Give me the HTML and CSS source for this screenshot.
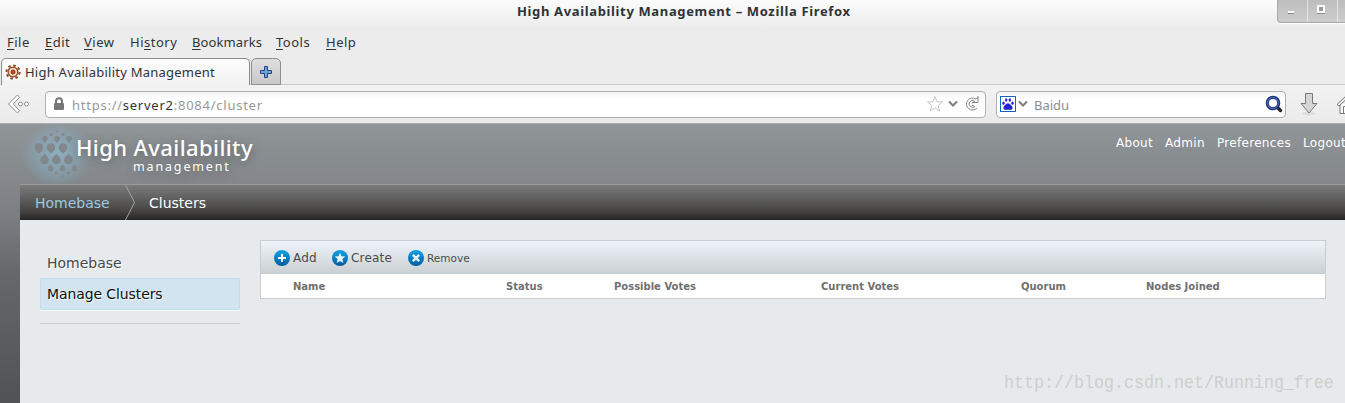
FILE: index.html
```html
<!DOCTYPE html>
<html lang="en">
<head>
    <meta charset="utf-8">
    <title>High Availability Management</title>
    <link rel="stylesheet" href="styles.css">
</head>
<body>
    <div class="titlebar">
        <span class="window-title">High Availability Management – Mozilla Firefox</span>
        <div class="window-buttons">
            <span><i class="minimize"></i></span>
            <span><i class="maximize"></i></span>
            <span></span>
        </div>
    </div>

    <div class="menubar">
        <span class="file"><u>F</u>ile</span>
        <span class="edit"><u>E</u>dit</span>
        <span class="view"><u>V</u>iew</span>
        <span class="history">Hi<u>s</u>tory</span>
        <span class="bookmarks"><u>B</u>ookmarks</span>
        <span class="tools"><u>T</u>ools</span>
        <span class="help"><u>H</u>elp</span>
    </div>

    <div class="tabs">
        <div class="tab">
            <svg width="16" height="16" viewBox="0 0 16 16">
                <rect width="16" height="16" fill="#fff"/>
                <circle cx="8" cy="8" r="6.6" fill="none" stroke="#89461f" stroke-width="2" stroke-dasharray="2.6 2.58"/>
                <circle cx="8" cy="8" r="4.8" fill="#f0dfd0" stroke="#96552d" stroke-width="1.6"/>
                <circle cx="8" cy="8" r="2" fill="#d4500f" stroke="#7c2b10"/>
            </svg>
            <span>High Availability Management</span>
        </div>
        <div class="new-tab">
            <svg width="14" height="14" viewBox="0 0 14 14">
                <path d="M5.500 1.500h3v4h4v3h-4v4h-3v-4h-4v-3h4z" fill="#6f9fd8" stroke="#204a87" stroke-linejoin="round"/>
            </svg>
        </div>
    </div>

    <div class="toolbar">
        <svg class="back" width="24" height="22" viewBox="0 0 24 22">
            <path d="M10.500 2L1.500 11l9 9 2-2.300L6.300 11l6.200-6.700z" fill="#fff" stroke="#8b8d89" stroke-linejoin="round"/>
            <circle cx="13.500" cy="11" r="2" fill="#fff" stroke="#8b8d89"/>
            <circle cx="19.500" cy="11" r="2" fill="#fff" stroke="#8b8d89"/>
        </svg>
        <div class="url-box">
            <svg width="12" height="14" viewBox="0 0 12 14">
                <path d="M3 7V4.200a3 3 0 0 1 6 0V7" fill="none" stroke="#777" stroke-width="2"/>
                <rect x="1" y="6" width="10" height="7" rx="1" fill="#777"/>
            </svg>
            <span class="url">https://<b>server2</b>:8084/cluster</span>
            <svg class="star" width="18" height="18" viewBox="0 0 18 18">
                <path d="M9 1.500l2 5.200 5.500.3-4.300 3.500 1.500 5.500L9 12.900l-4.700 3.100 1.500-5.500L1.500 7 7 6.700z" fill="#fff" stroke="#c6c6c6" stroke-linejoin="round"/>
            </svg>
            <svg class="chevron" width="10" height="8" viewBox="0 0 10 8">
                <path d="M1 1.500l4 4 4-4" fill="none" stroke="#808080" stroke-width="2.200"/>
            </svg>
            <svg class="reload" width="16" height="16" viewBox="0 0 16 16">
                <path d="M13 12A6 6 0 1 1 12 3.200M14 0v6.500H8" fill="none" stroke="#858585" stroke-width="1"/>
                <path d="M11 10.500A3.500 3.500 0 1 1 10.500 5L8 7.500M8 9.500h2" fill="none" stroke="#858585" stroke-width="1"/>
                <path d="M12 3.200L14 1" stroke="#858585"/>
            </svg>
        </div>
        <div class="search-box">
            <svg width="16" height="16" viewBox="0 0 16 16">
                <rect x=".5" y=".5" width="15" height="15" fill="#fff" stroke="#0868c0"/>
                <g fill="#2420dc">
                    <ellipse cx="3.500" cy="7.200" rx="1.200" ry="1.600"/>
                    <ellipse cx="6.200" cy="4" rx="1.200" ry="1.700"/>
                    <ellipse cx="9.800" cy="4" rx="1.200" ry="1.700"/>
                    <ellipse cx="12.500" cy="7.200" rx="1.200" ry="1.600"/>
                    <path d="M8 7.200c1.600 0 2.100 1.300 3.300 2.300 1.800 1.500 1.700 4.300-.6 4.300H5.300c-2.300 0-2.400-2.800-.6-4.300C5.900 8.500 6.400 7.200 8 7.200z"/>
                </g>
            </svg>
            <svg class="chevron" width="10" height="8" viewBox="0 0 10 8">
                <path d="M1 1.500l4 4 4-4" fill="none" stroke="#808080" stroke-width="2.200"/>
            </svg>
            <span class="engine">Baidu</span>
            <svg class="magnifier" width="18" height="18" viewBox="0 0 18 18">
                <path d="M11.500 11.500l4 4" stroke="#242424" stroke-width="3.500" stroke-linecap="round"/>
                <circle cx="8" cy="8" r="5.700" fill="#fff" stroke="#20347f" stroke-width="3.200"/>
                <circle cx="8" cy="8" r="5.500" fill="none" stroke="#5471bd" stroke-width="1"/>
            </svg>
        </div>
        <svg class="download" width="20" height="24" viewBox="0 0 20 24">
            <ellipse cx="10" cy="21.500" rx="7" ry="1.500" fill="#dadada"/>
            <path d="M6.500 1.500h7v10h4.500l-8 9.500-8-9.500h4.500z" fill="#d3d6d4" stroke="#777a76" stroke-linejoin="round"/>
        </svg>
        <svg class="home" width="22" height="22" viewBox="0 0 22 22">
            <path d="M4 11v9.500h14V11" fill="#fff" stroke="#777a76"/>
            <path d="M11 2L1 11.500 3 13l8-7.500 8 7.500 2-1.500z" fill="#eee" stroke="#777a76"/>
            <path d="M7.500 20v-6.500h4V20" fill="#fff" stroke="#777a76"/>
        </svg>
    </div>

    <div class="page">
        <div class="header">
            <svg class="logo-mark" width="84" height="60" viewBox="0 0 84 60">
                <defs>
                    <radialGradient id="glow">
                        <stop offset="0" stop-color="#8fb4c6" stop-opacity=".9"/>
                        <stop offset=".5" stop-color="#87aabb" stop-opacity=".65"/>
                        <stop offset="1" stop-color="#87aabb" stop-opacity="0"/>
                    </radialGradient>
                    <path id="drop" d="M0 5.300C-1.500 3.200-4.300 2-4.300-1A4.300 4.300 0 0 1 4.300-1C4.300 2 1.500 3.200 0 5.300z"/>
                </defs>
                <ellipse cx="39" cy="30" rx="36" ry="33" fill="url(#glow)"/>
                <g fill="#82878c">
                    <use href="#drop" transform="translate(21 24.500)"/>
                    <use href="#drop" transform="translate(33 24.500)"/>
                    <use href="#drop" transform="translate(45 24.500)"/>
                    <use href="#drop" transform="translate(26.500 35) rotate(180)"/>
                    <use href="#drop" transform="translate(38.500 35) rotate(180)"/>
                    <use href="#drop" transform="translate(50.500 35) rotate(180)"/>
                    <use href="#drop" transform="translate(27 15.500) scale(.65)"/>
                    <use href="#drop" transform="translate(39 15.500) scale(.65)"/>
                    <use href="#drop" transform="translate(51 15.500) scale(.65)"/>
                    <use href="#drop" transform="translate(32.500 44) rotate(180) scale(.65)"/>
                    <use href="#drop" transform="translate(44.500 44) rotate(180) scale(.65)"/>
                    <use href="#drop" transform="translate(56.500 44) rotate(180) scale(.65)"/>
                    <circle cx="33" cy="10.500" r="1.600"/>
                    <circle cx="45" cy="10.500" r="1.600"/>
                    <circle cx="39" cy="7.500" r="1"/>
                    <circle cx="38.500" cy="49" r="1.600"/>
                    <circle cx="50.500" cy="49" r="1.600"/>
                    <circle cx="44.500" cy="52" r="1"/>
                </g>
            </svg>
            <div class="brand">
                <div class="brand-name">High Availability</div>
                <div class="brand-sub">management</div>
            </div>
            <div class="user-links">
                <a>About</a>
                <a>Admin</a>
                <a>Preferences</a>
                <a>Logout</a>
            </div>
        </div>

        <div class="main">
            <div class="breadcrumb">
                <a>Homebase</a>
                <svg width="11" height="35" viewBox="0 0 11 35">
                    <path d="M.5 0l9 17.500L.5 35" fill="none" stroke="#a2a2a2"/>
                </svg>
                <span>Clusters</span>
            </div>

            <div class="content">
                <div class="sidebar">
                    <a>Homebase</a>
                    <a class="active">Manage Clusters</a>
                    <hr>
                </div>
                <div class="clusters">
                    <div class="actions">
                        <a class="add">
                            <svg width="16" height="16" viewBox="0 0 16 16">
                                <defs>
                                    <linearGradient id="blue" x2="0" y2="1">
                                        <stop offset="0" stop-color="#13a3e6"/>
                                        <stop offset="1" stop-color="#005c9d"/>
                                    </linearGradient>
                                </defs>
                                <circle cx="8" cy="8" r="8" fill="url(#blue)"/>
                                <path d="M8 4v8M4 8h8" stroke="#fff" stroke-width="2"/>
                            </svg>
                            <span>Add</span>
                        </a>
                        <a class="create">
                            <svg width="16" height="16" viewBox="0 0 16 16">
                                <circle cx="8" cy="8" r="8" fill="url(#blue)"/>
                                <path d="M8 2.800l1.500 3.500 3.800.3-2.900 2.500.9 3.800L8 10.900l-3.300 2 .9-3.800-2.900-2.500 3.800-.3z" fill="#e8f3fa"/>
                            </svg>
                            <span>Create</span>
                        </a>
                        <a class="remove">
                            <svg width="16" height="16" viewBox="0 0 16 16">
                                <circle cx="8" cy="8" r="8" fill="url(#blue)"/>
                                <path d="M4.800 4.800l6.400 6.400M11.200 4.800l-6.400 6.400" stroke="#e8f3fa" stroke-width="2.400"/>
                            </svg>
                            <span>Remove</span>
                        </a>
                    </div>
                    <div class="columns">
                        <span>Name</span>
                        <span>Status</span>
                        <span>Possible Votes</span>
                        <span>Current Votes</span>
                        <span>Quorum</span>
                        <span>Nodes Joined</span>
                    </div>
                </div>
            </div>
        </div>
    </div>
    <div class="watermark">http://blog.csdn.net/Running_free</div>
</body>
</html>
```
FILE: styles.css
```css
* {
    box-sizing: border-box;
}

body {
    margin: 0;
    height: 403px;
    overflow: hidden;
    display: flex;
    flex-direction: column;
    position: relative;
    background: #ececec;
    color: #2e3436;
    font-family: "Noto Sans", "Open Sans", sans-serif;
    font-size: 13px;
    white-space: nowrap;
}

svg {
    display: block;
    flex: none;
}

/* window frame */
.titlebar {
    height: 28px;
    flex: none;
    display: flex;
    justify-content: flex-end;
    background: linear-gradient(#fcfcfc, #ececec);
}

.window-title {
    width: 759px;
    margin-right: 1px;
    line-height: 23px;
    font-weight: bold;
    letter-spacing: 0.640px;
}

.window-buttons {
    width: 68px;
    height: 23px;
    display: flex;
    border: 1px solid #a8a8a8;
    border-width: 0 0 1px 1px;
    border-radius: 0 0 0 4px;
    background: linear-gradient(#bdbdbd, #cdcdcd);
    box-shadow: 0 1px #fff;
}

.window-buttons span {
    width: 30px;
    flex: none;
    border-right: 1px solid #e5e5e5;
}

.window-buttons span:last-child {
    width: 7px;
    border: none;
}

.minimize {
    display: block;
    width: 6px;
    height: 3px;
    margin: 11px 0 0 10px;
    background: #fff;
    border-bottom: 1px solid #888;
}

.maximize {
    display: block;
    width: 8px;
    height: 8px;
    margin: 5px 0 0 9px;
    border: 2px solid #fff;
    background: #999;
    box-shadow: 0 1px #888;
}

.menubar {
    height: 30px;
    flex: none;
    display: flex;
    padding-left: 7px;
    line-height: 29px;
    letter-spacing: 0.5px;
}

.menubar u {
    text-underline-offset: 2px;
}

.file { width: 38px; }
.edit { width: 39px; }
.view { width: 46px; }
.history { width: 62px; }
.bookmarks { width: 84px; letter-spacing: 0.1px; }
.tools { width: 50px; }

.tabs {
    height: 27px;
    flex: none;
    display: flex;
    gap: 1px;
    padding-left: 1px;
    border-bottom: 1px solid #c9c9c9;
}

.tab {
    width: 249px;
    height: 27px;
    display: flex;
    align-items: center;
    gap: 4px;
    padding-left: 3px;
    border: 1px solid #8d8d8d;
    border-bottom: none;
    border-radius: 5px 5px 0 0;
    background: linear-gradient(#fdfdfd, #f1f1f1);
    letter-spacing: 0.240px;
}

.new-tab {
    width: 30px;
    height: 27px;
    padding: 6px 7px;
    border: 1px solid #8d8d8d;
    border-radius: 5px 5px 0 0;
    background: linear-gradient(#dedede, #c9c9c9);
}

.toolbar {
    height: 39px;
    flex: none;
    display: flex;
    align-items: center;
    padding: 0 0 1px 7px;
    background: linear-gradient(#f2f2f2, #ebebeb);
    border-bottom: 1px solid #a7abad;
    color: #8b8d8d;
}

.url-box,
.search-box {
    height: 27px;
    display: flex;
    align-items: center;
    flex: none;
    margin-top: 1px;
    border: 1px solid #b0b0b0;
    border-radius: 4px;
    background: linear-gradient(#f2f2f2, #fff 7px);
}

.url-box {
    width: 941px;
    margin-left: 14px;
    padding: 0 5px 0 7px;
}

.url {
    flex: 1;
    margin-left: 7px;
    padding-top: 2px;
    color: #989898;
    letter-spacing: 0.750px;
}

.url b {
    color: #2e3436;
    font-weight: normal;
}

.url-box .star {
    margin-right: 1px;
}

.url-box .chevron {
    margin: 0 6px 0 3px;
}

.search-box {
    width: 290px;
    margin-left: 10px;
    padding: 0 2px 0 3px;
}

.search-box .chevron {
    margin: 0 6px 0 2px;
}

.engine {
    flex: 1;
    padding-top: 2px;
}

.download {
    margin-left: 13px;
}

.home {
    margin-left: 17px;
}

/* application */
.page {
    flex: 1;
    background: linear-gradient(#909598, #7e8286 80px, #65686b 150px, #505255);
    font-family: "DejaVu Sans", sans-serif;
}

.header {
    height: 60px;
    display: flex;
    color: #fff;
}

.logo-mark {
    margin-left: 18px;
}

.brand {
    margin-left: -26px;
    font-family: "Noto Sans", sans-serif;
    text-shadow: 1px 2px 8px rgba(80, 80, 85, 0.7);
}

.brand-name {
    height: 36px;
    padding-top: 11px;
    font-size: 22px;
    line-height: 25px;
    font-weight: 500;
    letter-spacing: 0.4px;
}

.brand-sub {
    margin-left: 57px;
    font-size: 12.500px;
    line-height: 13px;
    letter-spacing: 1.850px;
}

.user-links {
    display: flex;
    gap: 12px;
    margin: 0 -1px 0 auto;
    font-size: 12px;
    line-height: 38px;
    letter-spacing: 0.320px;
}

.main {
    height: 219px;
    margin-left: 20px;
    background: #e6eaed;
}

.breadcrumb {
    height: 36px;
    display: flex;
    align-items: center;
    padding-left: 15px;
    border-top: 1px solid #999;
    background: linear-gradient(#7b7b7b, #454443 75%, #262423);
    color: #fff;
    font-size: 14px;
}

.breadcrumb a {
    width: 90px;
    color: #9fc7df;
}

.breadcrumb span {
    margin-left: 13px;
}

.content {
    display: flex;
    gap: 20px;
    padding: 20px 19px 0 20px;
}

.sidebar {
    width: 200px;
    padding-top: 7px;
    font-size: 14px;
}

.sidebar a {
    display: block;
    height: 31px;
    padding-left: 7px;
    line-height: 32px;
    color: #494949;
    text-shadow: 1px 1px 1px #fff;
}

.sidebar a.active {
    height: 32px;
    padding-left: 6px;
    line-height: 30px;
    border: 1px solid #c0dfec;
    border-radius: 2px;
    background: #d1e4f0;
    box-shadow: 0 1px #f5f9fc;
    color: #111;
    letter-spacing: -0.1px;
}

.sidebar hr {
    margin: 13px 0 0;
    border: none;
    border-top: 1px solid #c8cdd1;
}

.clusters {
    width: 1066px;
    height: 59px;
    border: 1px solid #c8cdd2;
    background: #fff;
}

.actions {
    height: 33px;
    display: flex;
    padding: 2px 0 0 13px;
    border-bottom: 1px solid #c8cdd2;
    background: linear-gradient(#eff4fb, #cbd0d4);
    color: #4c4c4c;
    font-size: 12px;
    letter-spacing: 0.2px;
}

.actions a {
    display: flex;
    align-items: center;
    gap: 3px;
}

.actions .add { width: 58px; }
.actions .create { width: 76px; }
.actions .remove { font-size: 10.500px; letter-spacing: 0; }

.columns {
    display: grid;
    grid-template-columns: 213px 108px 207px 200px 125px auto;
    padding-left: 32px;
    color: #707070;
    font-size: 10px;
    font-weight: bold;
    line-height: 25px;
}

.watermark {
    position: absolute;
    top: 372px;
    left: 1004px;
    color: #cdcfcc;
    font-family: "Liberation Mono", monospace;
    font-size: 16.670px;
    line-height: 22px;
    transform: scaleY(1.15);
}
```
